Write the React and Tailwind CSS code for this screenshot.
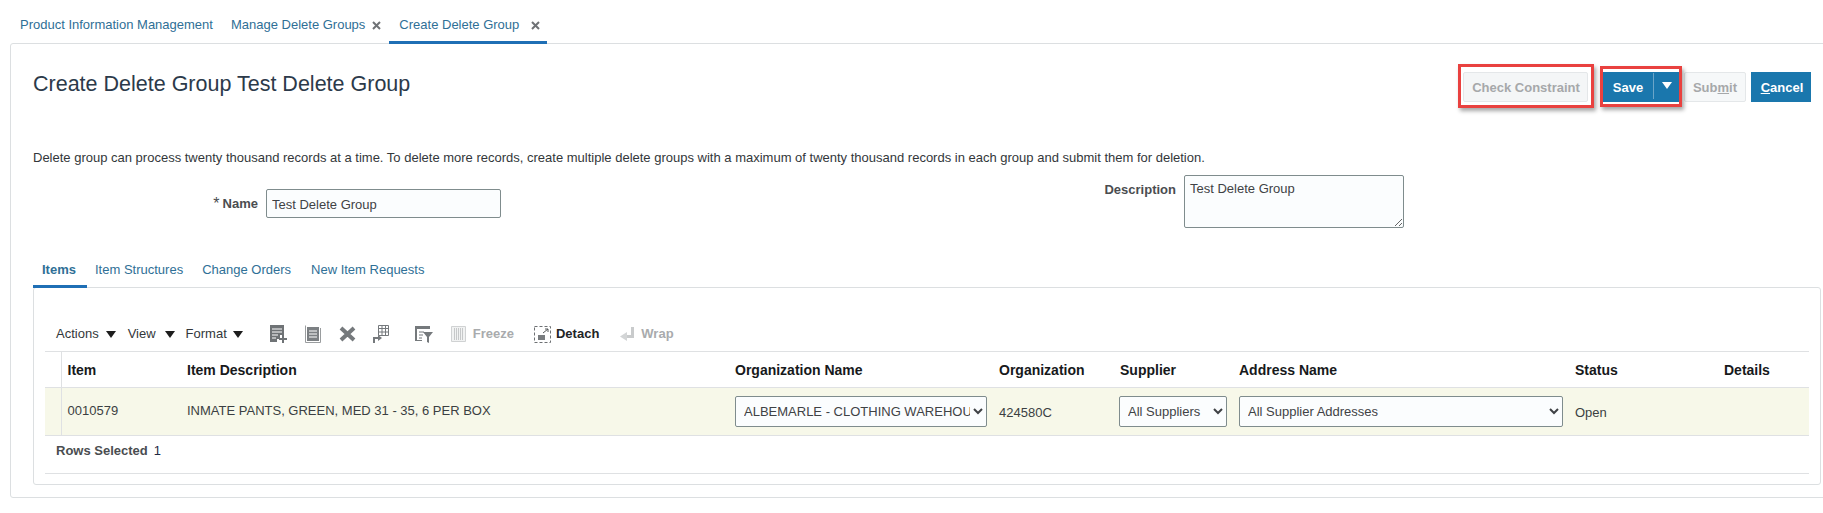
import React from "react";

const CloseIcon = ({ className }) => (
  <svg width="9" height="9" viewBox="0 0 9 9" className={className}>
    <path d="M1 1l7 7M8 1l-7 7" stroke="#6f7275" strokeWidth="2" />
  </svg>
);

const Caret = ({ className }) => (
  <svg width="10" height="7" viewBox="0 0 10 7" className={className}>
    <path d="M0 0h10L5 7z" fill="#1d1d1d" />
  </svg>
);

// toolbar icons
const AddRowIcon = () => (
  <svg width="18" height="19" viewBox="0 0 18 19">
    <path d="M0 0h14v10h-4v4H7v3H0z" fill="#6f7376" />
    <path d="M2 4h10M2 7h10M2 10h6M2 13h4" stroke="#fff" strokeWidth="1" />
    <path d="M13 10v8M9 14h8" stroke="#6f7376" strokeWidth="2" />
  </svg>
);

const DuplicateIcon = () => (
  <svg width="16" height="18" viewBox="0 0 16 18">
    <path d="M0.500 0.500v17h15V3" fill="none" stroke="#9a9d9f" />
    <path d="M2 2h12v14H2z" fill="#7c8083" />
    <path d="M4 6h8M4 9h8M4 12h8" stroke="#fff" strokeWidth="1" />
  </svg>
);

const DeleteIcon = () => (
  <svg width="17" height="16" viewBox="0 0 17 16">
    <path d="M2 2l13 12M15 2L2 14" stroke="#75797c" strokeWidth="4" />
  </svg>
);

const ReorderIcon = () => (
  <svg width="16" height="19" viewBox="0 0 16 19">
    <path d="M5.500 0.500h10v10h-10zM5.500 3.500h10M5.500 7h10M9 0.500v10M12.500 0.500v10" fill="none" stroke="#75797c" />
    <path d="M1 18v-5h5" fill="none" stroke="#75797c" strokeWidth="2" />
    <path d="M5 10l4 3-4 3z" fill="#75797c" />
  </svg>
);

const QueryIcon = () => (
  <svg width="18" height="17" viewBox="0 0 18 17">
    <path d="M0 0h15v3H0zM0 3h2v12H0zM0 14h7v1H0z" fill="#75797c" />
    <path d="M4 6h5M4 9h4M4 12h3" stroke="#75797c" strokeWidth="1" />
    <path d="M8 6h10l-4 5v6l-2-1v-5z" fill="#75797c" />
  </svg>
);

const FreezeIcon = () => (
  <svg width="15" height="16" viewBox="0 0 15 16">
    <path d="M0.500 0.500h14v15h-14z" fill="#f1f2f2" stroke="#d0d2d3" />
    <path d="M3.500 2v12M5.500 2v12M7.500 2v12M9.500 2v12M11.500 2v12" stroke="#c6c8c9" />
  </svg>
);

const DetachIcon = () => (
  <svg width="17" height="17" viewBox="0 0 17 17">
    <path d="M0.500 0.500h16v16h-16z" fill="none" stroke="#6d7073" strokeDasharray="3 2" />
    <path d="M4 9h7v5H4z" fill="#7a7d80" />
    <path d="M9 7l5-4M11 3h3v3" fill="none" stroke="#55585a" />
  </svg>
);

const WrapIcon = () => (
  <svg width="15" height="15" viewBox="0 0 15 15">
    <path d="M11 0h3v11H6V8h5z" fill="#c9cbcc" />
    <path d="M7 5v9L0 9.500z" fill="#d3d5d6" />
  </svg>
);

const Highlight = ({ className }) => (
  <div
    className={`absolute border-[3px] border-[#e9413f] shadow-[2px_3px_4px_rgba(0,0,0,0.35)] pointer-events-none ${className}`}
  />
);

const Select = ({ value, className }) => (
  <select
    defaultValue={value}
    className={`h-[31px] pl-[4px] rounded-[2px] border border-[#7f8c8d] bg-[#fbfdfe] text-[13px] text-[#3f4245] ${className}`}
  >
    <option>{value}</option>
  </select>
);

const App = () => {
  return (
    <div className="w-[1823px] h-[513px] overflow-hidden bg-white font-['Liberation_Sans',Arial,sans-serif] text-[13px] text-[#3b3f42]">
      {/* top tabs */}
      <div className="h-[44px] flex items-start pl-[20px] text-[13px] text-[#2f6f96]">
        <span className="mt-[17px] leading-[16px]">Product Information Management</span>
        <span className="mt-[17px] ml-[18px] leading-[16px] flex items-center">
          Manage Delete Groups
          <CloseIcon className="ml-[7px]" />
        </span>
        <span className="ml-[8px] w-[158px] h-[44px] pt-[17px] pl-[10px] leading-[16px] flex items-start border-b-[3px] border-[#1f6fb5]">
          Create Delete Group
          <span className="h-[16px] flex items-center">
            <CloseIcon className="ml-[12px]" />
          </span>
        </span>
      </div>

      <div className="ml-[10px] w-[1830px] h-[455px] -mt-[1px] border border-[#dcdfe1] rounded-[3px] pl-[22px]">
        {/* title and actions */}
        <div className="w-[1778px] pt-[28px] flex items-start justify-between">
          <h1 className="mt-[-4px] text-[21.500px] leading-[32px] text-[#2c3a4a]">
            Create Delete Group Test Delete Group
          </h1>
          <div className="flex items-start font-bold text-[13px]">
            <div className="relative">
              <button className="w-[125px] h-[30px] pt-[2px] pl-[1px] bg-[#f4f6f7] border border-[#e4e7e9] rounded-[2px] text-[#a6a8aa]">
                Check Constraint
              </button>
              <Highlight className="left-[-5px] top-[-8px] w-[136px] h-[44px]" />
            </div>
            <div className="relative ml-[15px]">
              <div className="w-[76px] h-[30px] flex bg-[#1a77ad] text-white">
                <span className="w-[50px] pt-[1px] leading-[30px] text-center">Save</span>
                <span className="w-[26px] h-[26px] mt-[1px] border-l border-[#6ba5c8] flex justify-center pt-[9px]">
                  <svg width="10" height="7" viewBox="0 0 10 7">
                    <path d="M0 0h10L5 7z" fill="#fff" />
                  </svg>
                </span>
              </div>
              <Highlight className="left-[-3px] top-[-6px] w-[82px] h-[41px]" />
            </div>
            <button className="ml-[5px] w-[62px] h-[30px] pt-[2px] bg-[#f6f8f9] border border-[#e4e7e9] rounded-[2px] text-[#a6a8aa]">
              Sub<span className="underline">m</span>it
            </button>
            <button className="ml-[5px] w-[60px] h-[30px] pt-[2px] pl-[2px] bg-[#1a77ad] text-white">
              <span className="underline">C</span>ancel
            </button>
          </div>
        </div>

        <p className="mt-[48px] leading-[16px] text-[13px] text-[#33373a]">
          Delete group can process twenty thousand records at a time. To delete more records, create multiple delete groups with a maximum of twenty thousand records in each group and submit them for deletion.
        </p>

        {/* name and description */}
        <div className="mt-[9px] h-[53px] flex items-start">
          <div className="w-[468px] mt-[14px] flex items-start">
            <label className="w-[233px] pr-[8px] flex justify-end font-bold leading-[30px] text-[#4a4d50]">
              <span className="font-normal text-[16px] mr-[3px]">*</span>Name
            </label>
            <input
              readOnly
              value="Test Delete Group"
              className="w-[235px] h-[29px] px-[5px] pt-[1px] border border-[#7f8c8d] rounded-[2px] bg-[#fbfdfe] text-[13px] text-[#3f4245]"
            />
          </div>
          <label className="w-[683px] pr-[8px] text-right font-bold leading-[30px] text-[#4a4d50]">
            Description
          </label>
          <textarea
            readOnly
            value="Test Delete Group"
            className="w-[220px] h-[53px] px-[5px] pt-[5px] border border-[#7f8c8d] rounded-[2px] bg-[#fbfdfe] text-[13px] leading-[15px] text-[#3f4245]"
          />
        </div>

        {/* item tabs */}
        <div className="mt-[29px] h-[31px] flex items-start text-[#2f6f96] leading-[26px]">
          <span className="w-[54px] h-[31px] pl-[9px] border-b-[3px] border-[#1f6fb5] font-bold">Items</span>
          <span className="ml-[8px]">Item Structures</span>
          <span className="ml-[19px]">Change Orders</span>
          <span className="ml-[20px]">New Item Requests</span>
        </div>

        <div className="-mt-[1px] w-[1788px] h-[198px] border border-[#dcdfe1] rounded-[3px] px-[11px]">
          {/* toolbar */}
          <div className="h-[64px] pt-[29px] flex items-center border-b border-[#dfe1e3] pl-[11px] text-[#33373a]">
            <span>Actions</span>
            <Caret className="ml-[7px]" />
            <span className="ml-[12px]">View</span>
            <Caret className="ml-[9px]" />
            <span className="ml-[11px]">Format</span>
            <Caret className="ml-[6px]" />
            <span className="ml-[27px] flex"><AddRowIcon /></span>
            <span className="ml-[17px] flex"><DuplicateIcon /></span>
            <span className="ml-[18px] flex"><DeleteIcon /></span>
            <span className="ml-[17px] flex"><ReorderIcon /></span>
            <span className="ml-[26px] flex"><QueryIcon /></span>
            <span className="ml-[18px] flex"><FreezeIcon /></span>
            <span className="ml-[7px] font-bold text-[#a9abad]">Freeze</span>
            <span className="ml-[20px] flex"><DetachIcon /></span>
            <span className="ml-[5px] font-bold text-[#222426]">Detach</span>
            <span className="ml-[21px] flex"><WrapIcon /></span>
            <span className="ml-[6px] font-bold text-[#a9abad]">Wrap</span>
          </div>

          {/* items table */}
          <table className="w-[1764px] table-fixed">
            <colgroup>
              <col className="w-[16px]" />
              <col className="w-[120px]" />
              <col className="w-[547px]" />
              <col className="w-[264px]" />
              <col className="w-[121px]" />
              <col className="w-[119px]" />
              <col className="w-[336px]" />
              <col className="w-[149px]" />
              <col className="w-[92px]" />
            </colgroup>
            <thead>
              <tr className="h-[35px] border-b border-[#dfe1e3] text-left font-bold text-[14px] text-[#17191b]">
                <th className="border-r border-[#dfe1e3]"></th>
                <th className="pl-[6px] pt-[2px]">Item</th>
                <th className="pl-[6px] pt-[2px]">Item Description</th>
                <th className="pl-[7px] pt-[2px]">Organization Name</th>
                <th className="pl-[7px] pt-[2px]">Organization</th>
                <th className="pl-[7px] pt-[2px]">Supplier</th>
                <th className="pl-[7px] pt-[2px]">Address Name</th>
                <th className="pl-[7px] pt-[2px]">Status</th>
                <th className="pl-[7px] pt-[2px]">Details</th>
              </tr>
            </thead>
            <tbody>
              <tr className="h-[48px] border-b border-[#dfe1e3] bg-[#f7f8e9] text-[13px] text-[#3b3f42]">
                <td className="border-r border-[#dfe1e3]"></td>
                <td className="pl-[6px]">0010579</td>
                <td className="pl-[6px]">INMATE PANTS, GREEN, MED 31 - 35, 6 PER BOX</td>
                <td className="pl-[7px]">
                  <Select value="ALBEMARLE - CLOTHING WAREHOUSE" className="w-[252px]" />
                </td>
                <td className="pl-[7px] pt-[3px]">424580C</td>
                <td className="pl-[6px]">
                  <Select value="All Suppliers" className="w-[108px]" />
                </td>
                <td className="pl-[7px]">
                  <Select value="All Supplier Addresses" className="w-[324px]" />
                </td>
                <td className="pl-[7px] pt-[3px]">Open</td>
                <td className="pl-[7px]"></td>
              </tr>
            </tbody>
          </table>

          {/* footer */}
          <div className="h-[38px] pt-[7px] pl-[11px] border-b border-[#dfe1e3] leading-[16px] font-bold text-[#4a4d50]">
            Rows Selected
            <span className="ml-[6px] font-normal text-[#1f2a44]">1</span>
          </div>
        </div>
      </div>
    </div>
  );
};

export default App;
